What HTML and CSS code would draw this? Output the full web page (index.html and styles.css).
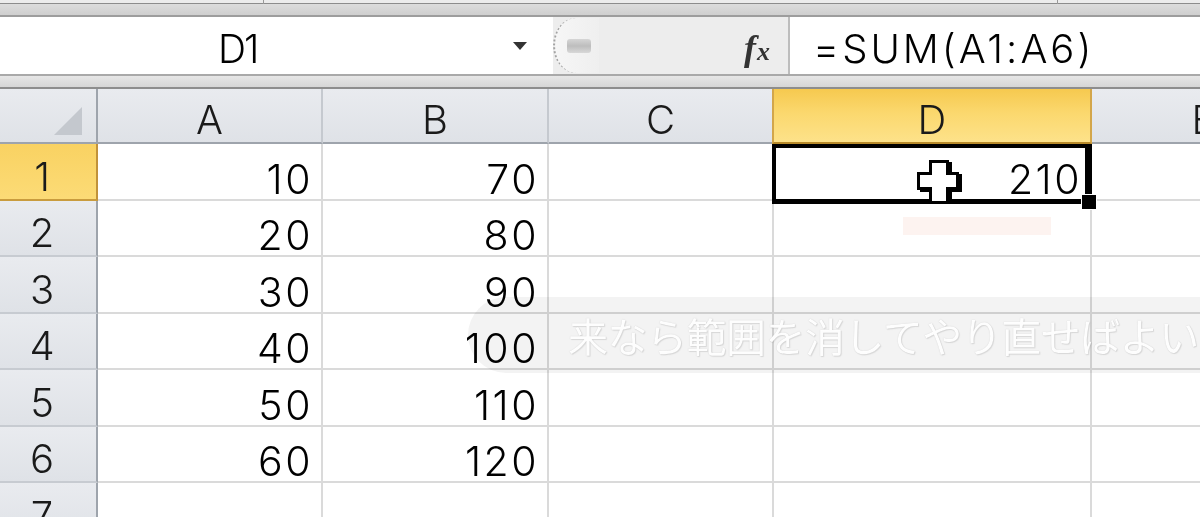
FILE: index.html
```html
<!DOCTYPE html>
<html lang="ja">
<head>
<meta charset="utf-8">
<title>Excel</title>
<link rel="stylesheet" href="styles.css">
</head>
<body>
<div class="app">
  <div class="ribbon-edge">
    <span class="tick tick-a"></span>
    <span class="tick tick-b"></span>
  </div>
  <div class="formula-bar">
    <div class="namebox">
      <span class="name">D1</span>
      <span class="dropdown"></span>
    </div>
    <div class="fx-area">
      <div class="knob"><span class="grip"></span></div>
      <span class="fx"><i class="f">f</i><i class="x">x</i></span>
    </div>
    <div class="formula">=SUM(A1:A6)</div>
  </div>
  <div class="bar-gap"></div>

  <div class="sheet">
    <div class="hd corner"><span class="tri"></span></div>
    <div class="hd col">A</div>
    <div class="hd col">B</div>
    <div class="hd col">C</div>
    <div class="hd col sel">D</div>
    <div class="hd col">E</div>

    <div class="hd row sel">1</div>
    <div class="cell">10</div><div class="cell">70</div><div class="cell"></div><div class="cell">210</div><div class="cell"></div>
    <div class="hd row">2</div>
    <div class="cell">20</div><div class="cell">80</div><div class="cell"></div><div class="cell"></div><div class="cell"></div>
    <div class="hd row">3</div>
    <div class="cell">30</div><div class="cell">90</div><div class="cell"></div><div class="cell"></div><div class="cell"></div>
    <div class="hd row">4</div>
    <div class="cell">40</div><div class="cell">100</div><div class="cell"></div><div class="cell"></div><div class="cell"></div>
    <div class="hd row">5</div>
    <div class="cell">50</div><div class="cell">110</div><div class="cell"></div><div class="cell"></div><div class="cell"></div>
    <div class="hd row">6</div>
    <div class="cell">60</div><div class="cell">120</div><div class="cell"></div><div class="cell"></div><div class="cell"></div>
    <div class="hd row">7</div>
    <div class="cell"></div><div class="cell"></div><div class="cell"></div><div class="cell"></div><div class="cell"></div>

    <div class="selection"><span class="handle"></span></div>
    <div class="pink-mark"></div>
    <svg class="cursor" width="48" height="46" viewBox="0 0 48 46">
      <path d="M16 3 H36 V15 H46 V33 H36 V45 H16 V33 H4 V15 H16 Z" fill="#000"/>
      <path d="M13 1 H33 V13 H43 V31 H33 V43 H13 V31 H1 V13 H13 Z" fill="#000"/>
      <path d="M16 4 H30 V16 H40 V28 H30 V42 H16 V28 H4 V16 H16 Z" fill="#fff"/>
    </svg>
  </div>

  <div class="subtitle-box"></div>
  <div class="subtitle"><span>来なら範囲を消してやり直せばよい</span></div>
</div>
</body>
</html>
```
FILE: styles.css
```css
html, body {
  margin: 0;
  padding: 0;
  background: #fff;
}
body {
  width: 1200px;
  height: 517px;
  overflow: hidden;
  font-family: "Inter", "Liberation Sans", Arial, sans-serif;
  font-weight: 300;
}
.app {
  position: relative;
  width: 1200px;
  height: 517px;
  overflow: hidden;
}

/* top ribbon edge */
.ribbon-edge {
  position: relative;
  height: 15px;
  background: linear-gradient(#ececec 0, #ececec 3px, #8c8c8c 3px, #8c8c8c 4px, #dcdcdc 4px, #cfcfcf 15px);
  border-bottom: 2px solid #9d9d9d;
}
.tick {
  position: absolute;
  top: 0;
  width: 1px;
  height: 4px;
  background: #999;
}
.tick-a { left: 263px; }
.tick-b { left: 1057px; }

/* formula bar */
.formula-bar {
  display: flex;
  height: 57px;
  border-bottom: 2px solid #a9a9a9;
  background: #fff;
}
.namebox {
  width: 553px;
  display: flex;
  align-items: center;
  padding: 6px 26px 0 218px;
  box-sizing: border-box;
  font-size: 39px;
  color: #000;
}
.name {
  flex: 1;
  letter-spacing: -2px;
}
.dropdown {
  width: 0;
  height: 0;
  border-left: 7px solid transparent;
  border-right: 7px solid transparent;
  border-top: 8px solid #333;
  margin-top: -6px;
}
.fx-area {
  width: 237px;
  display: flex;
  align-items: center;
  justify-content: space-between;
  background: #ededed;
  border-right: 2px solid #bdbdbd;
  padding-right: 18px;
  box-sizing: border-box;
}
.knob {
  width: 46px;
  height: 55px;
  box-sizing: border-box;
  border-left: 2px dotted #a3a3a3;
  border-radius: 50% 0 0 50% / 50% 0 0 50%;
  background: linear-gradient(90deg, #f6f6f6, #efefef);
  display: flex;
  align-items: center;
  padding-left: 12px;
}
.grip {
  width: 24px;
  height: 14px;
  border-radius: 3px;
  background: linear-gradient(#d6d6d6, #bdbdbd 50%, #d8d8d8);
}
.fx {
  font-family: "Liberation Serif", "Times New Roman", serif;
  font-weight: bold;
  color: #333;
  display: flex;
  align-items: baseline;
  padding-top: 4px;
}
.fx .f {
  font-size: 36px;
  padding-right: 1px;
}
.fx .x {
  font-size: 26px;
}
.formula {
  flex: 1;
  display: flex;
  align-items: center;
  padding: 6px 0 0 23px;
  font-size: 40px;
  letter-spacing: 3px;
  color: #000;
}
.bar-gap {
  height: 11px;
  background: linear-gradient(#e6e6e6, #d6d6d6);
  border-bottom: 2px solid #8d8d8d;
}

/* sheet grid */
.sheet {
  position: relative;
  display: grid;
  grid-template-columns: 98px 225px 226px 225px 318px 225px;
  grid-template-rows: 55px repeat(7, 56.5px);
  width: 1317px;
}
.sheet > div {
  box-sizing: border-box;
}
.hd {
  background: linear-gradient(#e9ebef, #dfe2e7);
  color: #1a1a1a;
  font-size: 40px;
  line-height: 40px;
  display: flex;
  align-items: flex-end;
  justify-content: center;
}
.hd.col {
  border-right: 2px solid #c5c9cf;
  border-bottom: 2px solid #9ea4ac;
  padding-bottom: 2px;
}
.hd.row {
  border-right: 2px solid #9ea4ac;
  border-bottom: 2px solid #c7cbd1;
  padding-right: 12px;
  padding-bottom: 2px;
}
.hd.corner {
  position: relative;
  border-right: 2px solid #9ea4ac;
  border-bottom: 2px solid #9ea4ac;
}
.tri {
  position: absolute;
  right: 14px;
  bottom: 7px;
  width: 0;
  height: 0;
  border-left: 28px solid transparent;
  border-bottom: 28px solid #c4c8ce;
}
.hd.col.sel {
  background: linear-gradient(#f6c94f, #fbd86e 45%, #fde28a);
  border-left: 2px solid #d3a64a;
  border-right: 2px solid #d3a64a;
  border-bottom: 2px solid #b88a2a;
  margin-left: -2px;
}
.hd.row.sel {
  background: linear-gradient(#f9d262, #fcdb76);
  border-top: 2px solid #c99c3e;
  border-right: 2px solid #c1923a;
  border-bottom: 2px solid #c99c3e;
  margin-top: -2px;
}
.cell {
  border-right: 2px solid #dadada;
  border-bottom: 2px solid #dadada;
  font-size: 41px;
  line-height: 40px;
  letter-spacing: 2.5px;
  color: #000;
  display: flex;
  align-items: flex-end;
  justify-content: flex-end;
  padding-right: 8px;
}

/* selection around D1 */
.selection {
  position: absolute;
  left: 772px;
  top: 55px;
  width: 320px;
  height: 60px;
  box-sizing: border-box;
  border: 4px solid #000;
  border-bottom-width: 5px;
  border-right-width: 7px;
}
.handle {
  position: absolute;
  right: -12px;
  bottom: -11px;
  width: 14px;
  height: 14px;
  background: #000;
  border: 1px solid #fff;
}
.pink-mark {
  position: absolute;
  left: 903px;
  top: 128px;
  width: 148px;
  height: 18px;
  background: #fdf3f0;
}
.cursor {
  position: absolute;
  left: 916px;
  top: 70px;
}

/* subtitle overlay */
.subtitle-box {
  position: absolute;
  left: 468px;
  top: 297px;
  width: 760px;
  height: 76px;
  border-radius: 38px 0 0 38px;
  background: #f3f3f3;
  mix-blend-mode: multiply;
}
.subtitle {
  position: absolute;
  left: 568px;
  top: 297px;
  width: 660px;
  height: 76px;
  display: flex;
  align-items: center;
  overflow: hidden;
}
.subtitle span {
  font-family: "Noto Sans CJK JP", "Noto Sans", sans-serif;
  font-weight: 400;
  font-size: 40px;
  white-space: nowrap;
  color: rgba(255, 255, 255, 0.97);
  text-shadow: 0 0 1px rgba(120, 120, 120, 0.35), 1px 1px 1px rgba(150, 150, 150, 0.25);
  letter-spacing: -0.5px;
}
```
